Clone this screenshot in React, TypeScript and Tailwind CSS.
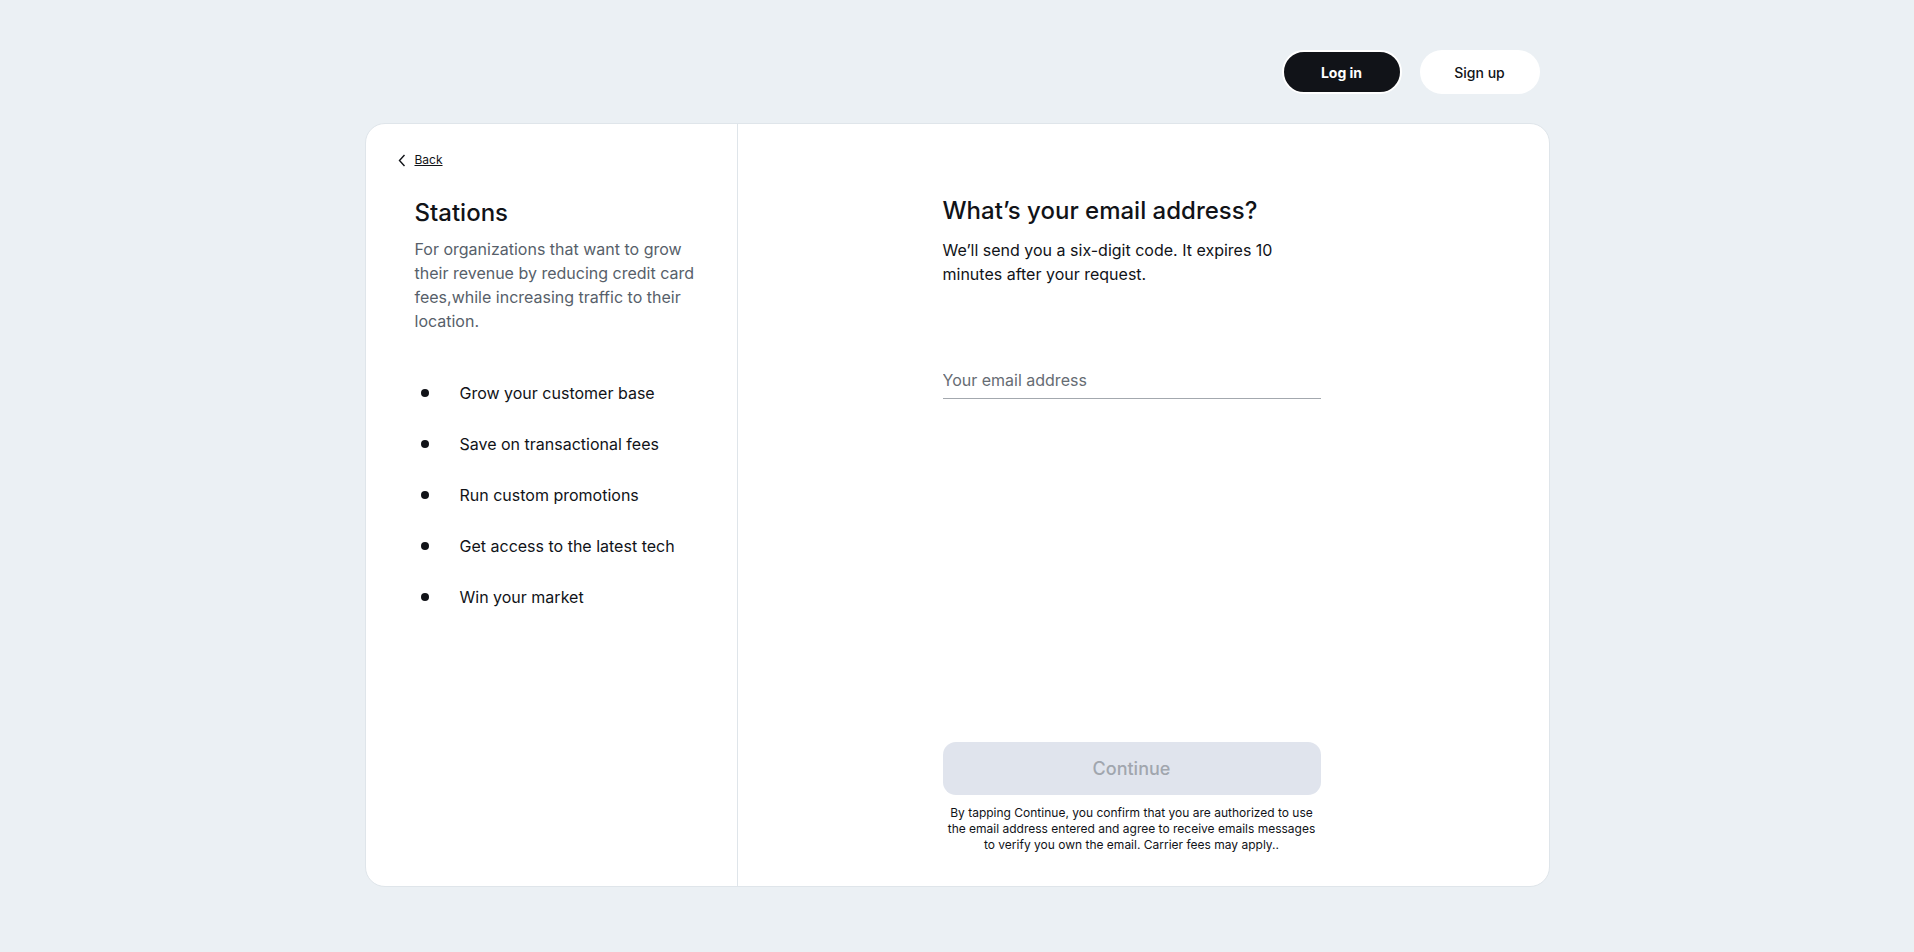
import React, { useState } from 'react';

const BENEFITS = [
  'Grow your customer base',
  'Save on transactional fees',
  'Run custom promotions',
  'Get access to the latest tech',
  'Win your market',
];

export default function App() {
  const [email, setEmail] = useState('');

  return (
    <div className="min-h-screen bg-[#ebf0f4] font-['Inter',sans-serif] text-[#111318]">
      <div className="w-[1185px] mx-auto pb-[66px]">
        <div className="flex justify-end items-center gap-[18px] pt-[50px] pr-[10px]">
          <button className="w-[120px] h-[44px] rounded-full bg-[#111318] border-2 border-white text-white text-[14px] font-bold">
            Log in
          </button>
          <button className="w-[120px] h-[44px] rounded-full bg-white text-[14px] font-medium">
            Sign up
          </button>
        </div>

        <div className="mt-[29px] h-[764px] flex bg-white rounded-[20px] border border-[#dfe5ea] overflow-hidden">
          {/* left: product summary */}
          <div className="w-[372px] shrink-0 border-r border-[#dfe5ea] pt-[27px]">
            <a href="#" className="flex items-center gap-[9px] pl-[32px] text-[12px] underline">
              <svg width="8" height="13" viewBox="0 0 8 13" fill="none" stroke="#111318" strokeWidth="1.4">
                <path d="M6.5 1 1.5 6.5 6.5 12" />
              </svg>
              Back
            </a>
            <div className="pl-[49px] pr-[30px] mt-[28px]">
              <h1 className="text-[24px] font-medium leading-[32px]">Stations</h1>
              <p className="mt-[8px] text-[16px] leading-[24px] text-[#575f6a]">
                For organizations that want to grow their revenue by reducing credit card fees,while increasing traffic to their location.
              </p>
              <ul className="mt-[48px] flex flex-col gap-[27px]">
                {BENEFITS.map((b) => (
                  <li key={b} className="flex items-center text-[16px] leading-[24px]">
                    <span className="w-[8px] h-[8px] rounded-full bg-[#111318] ml-[6px] mr-[31px]" />
                    {b}
                  </li>
                ))}
              </ul>
            </div>
          </div>

          {/* right: email form */}
          <div className="flex-1 pl-[205px] pt-[71px] pb-[33px]">
            <div className="w-[378px] h-full flex flex-col">
              <h2 className="text-[24px] font-medium leading-[32px]">What’s your email address?</h2>
              <p className="mt-[11px] text-[16px] leading-[24px]">
                We’ll send you a six-digit code. It expires 10 minutes after your request.
              </p>
              <input
                type="email"
                value={email}
                onChange={(e) => setEmail(e.target.value)}
                placeholder="Your email address"
                className="mt-[82px] w-full pb-[6px] border-b border-[#a3a8ae] text-[16px] leading-[24px] outline-none placeholder:text-[#666c73]"
              />
              <div className="flex-1" />
              <button
                disabled={!email}
                className="w-full h-[53px] rounded-[13px] bg-[#e0e4ed] text-[18px] font-medium text-[#a1a6ae]"
              >
                Continue
              </button>
              <p className="mt-[10px] text-[12px] leading-[16px] text-center">
                By tapping Continue, you confirm that you are authorized to use the email address entered and agree to receive emails messages to verify you own the email. Carrier fees may apply..
              </p>
            </div>
          </div>
        </div>
      </div>
    </div>
  );
}
